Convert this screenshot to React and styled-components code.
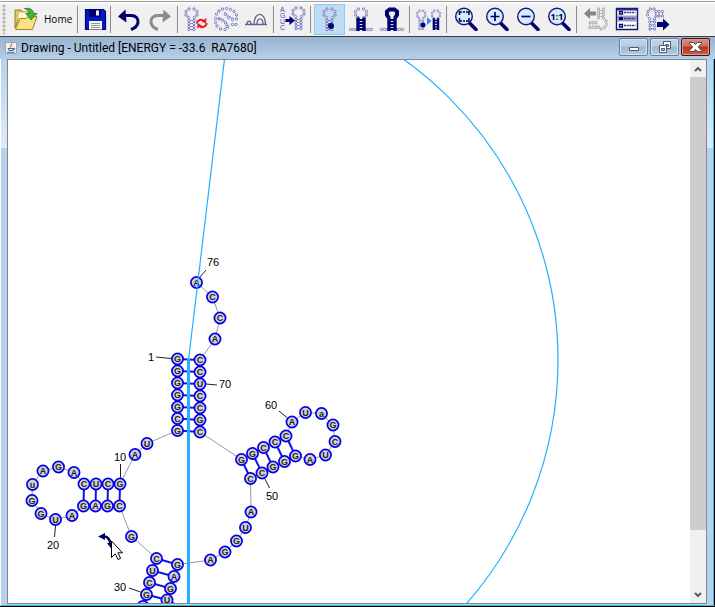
import React from "react";
import styled, { createGlobalStyle } from "styled-components";

const NAVY = "#00006e";
const CYAN = "#22b0ff";

const GlobalStyle = createGlobalStyle`
  html, body, #root {
    height: 100%;
  }
  body {
    margin: 0;
    overflow: hidden;
    font-family: "Open Sans", "Noto Sans", sans-serif;
    font-size: 12px;
    color: #000;
  }
  * {
    box-sizing: border-box;
  }
`;

const Page = styled.div`
  height: 100%;
  display: flex;
  flex-direction: column;
  background: #fff;
`;

const Toolbar = styled.div`
  display: flex;
  flex: none;
  align-items: center;
  height: 37px;
  padding-top: 2px;
  background: #f0f0f0;
  border-bottom: 1px solid #3c3c3c;
  box-shadow: inset 0 1px 0 #fafafa, inset 0 2px 0 #a0a0a0, inset 0 4px 0 #fafafa;
`;

const Grip = styled.div`
  width: 8px;
  height: 30px;
  background: radial-gradient(circle at 4px 2px, #b4b4b4 1px, transparent 2px);
  background-size: 8px 4px;
`;

const ToolButton = styled.button`
  display: flex;
  flex: none;
  align-items: center;
  justify-content: center;
  width: ${(props) => props.$width || 31}px;
  height: 31px;
  padding: 0;
  font: inherit;
  color: inherit;
  background: ${(props) => (props.$active ? "#c0dcf3" : "transparent")};
  border: 1px solid ${(props) => (props.$active ? "#90c8f6" : "transparent")};
  svg {
    display: block;
    flex: none;
  }
`;

const HomeButton = styled(ToolButton)`
  justify-content: flex-start;
  gap: 6px;
  padding-left: 5px;
  font-size: 10px;
`;

const Separator = styled.div`
  flex: none;
  width: 1px;
  height: 27px;
  margin: 0 3px 0 2px;
  background: #8c8c8c;
`;

const Frame = styled.section`
  flex: 1;
  min-height: 0;
  display: flex;
  flex-direction: column;
  background: #b9d1ea;
  border-bottom: 1px solid #000;
`;

const TitleBar = styled.header`
  display: flex;
  flex: none;
  align-items: center;
  height: 22px;
  padding: 0 5px;
  background: linear-gradient(#98b3d0, #b7d0e9);
  svg {
    display: block;
    flex: none;
  }
  h1 {
    flex: 1;
    margin: 0 0 0 4px;
    font-family: Roboto, "Open Sans", sans-serif;
    font-size: 12px;
    line-height: 20px;
    font-weight: 400;
    white-space: pre;
  }
`;

const WindowButtons = styled.div`
  display: flex;
  align-self: flex-start;
  gap: 2px;
  padding-top: 1px;
`;

const WindowButton = styled.button`
  display: flex;
  align-items: center;
  justify-content: center;
  width: 29px;
  height: 18px;
  padding: 0;
  border: 1px solid ${(props) => (props.$close ? "#43141a" : "#6d7f95")};
  border-radius: 2px;
  box-shadow: inset 0 0 0 1px ${(props) => (props.$close ? "#dc9a90" : "#d3e2f1")};
  background: ${(props) =>
    props.$close
      ? "linear-gradient(#d98f82 0%, #cd6d5c 45%, #b8301b 50%, #cf5f45 100%)"
      : "linear-gradient(#c2d6ea 0%, #b5cce4 45%, #98b5d3 50%, #b7cfe8 100%)"};
`;

const Body = styled.div`
  flex: 1;
  min-height: 0;
  display: flex;
  padding: 0 7px 1px 6px;
  border-left: 1px solid #fff;
  border-right: 1px solid #000;
  border-bottom: 1px solid #20c4f0;
  box-shadow: inset -1px 0 0 #20c4f0;
  background: linear-gradient(#b9d1ea, #dfebf7) 0 0 / 100% 89px no-repeat #b9d1ea;
`;

const Viewport = styled.div`
  flex: 1;
  min-width: 0;
  display: flex;
  border: 1px solid #7c8797;
  background: #fff;
`;

const Canvas = styled.svg`
  flex: 1;
  min-width: 0;
  height: 100%;
  display: block;
  font-family: "Liberation Sans", Arial, sans-serif;
`;

const ScrollBar = styled.div`
  display: flex;
  flex: none;
  flex-direction: column;
  width: 16px;
  background: #f0f0f0;
`;

const ScrollButton = styled.button`
  display: flex;
  flex: none;
  align-items: center;
  justify-content: center;
  height: 17px;
  padding: 0;
  border: 0;
  background: transparent;
`;

const Track = styled.div`
  flex: 1;
`;

const Thumb = styled.div`
  height: 89%;
  background: #cdcdcd;
`;

// x, y, base in sequence order
const BASES = [
  [177.5, 359, "G"],
  [177.5, 371, "G"],
  [177.5, 383, "G"],
  [177.5, 395, "G"],
  [177.5, 407, "G"],
  [177.5, 418.5, "C"],
  [177.5, 430.5, "G"],
  [147, 443.5, "U"],
  [135, 454.5, "A"],
  [120, 484, "G"],
  [108, 484, "C"],
  [96, 484, "U"],
  [84, 484, "C"],
  [74, 472.5, "A"],
  [58.5, 467, "G"],
  [43, 471, "A"],
  [32.5, 484.5, "u"],
  [32, 500.5, "G"],
  [41, 513.5, "G"],
  [55.5, 519.5, "U"],
  [72, 515.5, "A"],
  [83.5, 506, "G"],
  [95.5, 506, "A"],
  [107.5, 506, "G"],
  [119.5, 506, "C"],
  [131.5, 536.5, "G"],
  [156.5, 558.5, "C"],
  [152.5, 570.5, "U"],
  [149.5, 582.5, "C"],
  [146.5, 594.5, "G"],
  [143, 606.5, "G"],
  [163, 612.5, "C"],
  [167, 600, "U"],
  [170.5, 588.5, "G"],
  [174, 576.5, "A"],
  [177.5, 564.5, "G"],
  [210.5, 560, "A"],
  [225, 552, "G"],
  [236.5, 541, "G"],
  [245.5, 527.5, "U"],
  [251, 512, "A"],
  [250.5, 478.5, "C"],
  [262, 473, "C"],
  [273, 467, "G"],
  [284.5, 461.5, "G"],
  [295.5, 456, "G"],
  [310, 459.5, "A"],
  [325.5, 455, "U"],
  [335, 441.5, "C"],
  [333, 425, "G"],
  [321.5, 413.5, "a"],
  [305.5, 412.5, "U"],
  [292, 422, "A"],
  [286, 436, "C"],
  [275, 442, "C"],
  [263.5, 447.5, "C"],
  [252.5, 453.5, "G"],
  [241.5, 459.5, "G"],
  [200, 432, "C"],
  [200, 420, "G"],
  [200, 408, "C"],
  [200, 396, "C"],
  [200, 384, "U"],
  [200, 372, "C"],
  [200, 360, "C"],
  [215, 339, "A"],
  [220, 318, "C"],
  [212.5, 297, "C"],
  [196.5, 282.5, "A"],
];

// first index, last index, number of stacked pairs
const HELICES = [
  [0, 64, 7],
  [9, 24, 4],
  [26, 35, 5],
  [41, 57, 5],
];

const PAIRS = HELICES.flatMap(([a, b, n]) =>
  Array.from({ length: n }, (_, i) => [BASES[a + i], BASES[b - i]])
);

const LABELS = [
  { text: "76", x: 207, y: 266, tick: [200, 277, 206, 270] },
  { text: "1", x: 148, y: 361, tick: [156, 357, 171, 358.5] },
  { text: "70", x: 219, y: 388, tick: [206, 384, 217, 385] },
  { text: "60", x: 265, y: 409, tick: [279, 411, 287.5, 418] },
  { text: "50", x: 266, y: 500, tick: [264.5, 478, 269.5, 488] },
  { text: "10", x: 114, y: 461, tick: [120.5, 464, 120.5, 478] },
  { text: "20", x: 47, y: 549, tick: [55.5, 526, 54.5, 537] },
  { text: "30", x: 114, y: 591, tick: [129, 588, 140.5, 592] },
  { text: "40", x: 183, y: 613, tick: [172, 602, 180, 606] },
];

function Structure() {
  return (
    <Canvas role="img" aria-label="RNA secondary structure">
      <g transform="translate(-8 -60)">
        <polyline
          points={BASES.map(([x, y]) => `${x},${y}`).join(" ")}
          fill="none"
          stroke="#9a9a9a"
        />
        {PAIRS.map(([a, b], i) => (
          <line key={i} x1={a[0]} y1={a[1]} x2={b[0]} y2={b[1]} stroke="#1414e6" strokeWidth="2" />
        ))}
        {LABELS.filter(({ y }) => y < 604).map(({ text, x, y }) => (
          <text key={text} x={x} y={y} fontSize="11">
            {text}
          </text>
        ))}
        {LABELS.map(({ text, tick }) => (
          <line key={text} x1={tick[0]} y1={tick[1]} x2={tick[2]} y2={tick[3]} stroke="#222" />
        ))}
        {BASES.map(([x, y, base], i) => (
          <g key={i}>
            <circle cx={x} cy={y} r="5.6" fill="#d2d2d2" stroke="#0000f0" strokeWidth="1.7" />
            {y < 604 && (
              <text x={x} y={y + 3} fontSize="9" fontWeight="700" textAnchor="middle" fill="#222">
                {base}
              </text>
            )}
          </g>
        ))}
        <circle cx="188" cy="360" r="370" fill="none" stroke={CYAN} strokeWidth="1.2" />
        <path d="M224.5 59 188.5 360" stroke={CYAN} strokeWidth="1.2" />
        <path d="M188.5 359V2000" stroke={CYAN} strokeWidth="3" />
        <path d="M104 536.5q5 0 6.5 7" fill="none" stroke="#00005a" strokeWidth="2.6" />
        <path d="M98 536.5 105 533v7zM107 543h6.5l-2 6z" fill="#00005a" />
        <path
          d="M111.5 541v16.500l3.800-3.600 2.800 5.600 2.500-1.200-2.700-5.500h4.600z"
          fill="#fff"
          stroke="#000"
        />
      </g>
    </Canvas>
  );
}

function Icon({ children, size = 24 }) {
  return (
    <svg width={size} height={size} viewBox={`0 0 ${size} ${size}`} fill="none" aria-hidden="true">
      {children}
    </svg>
  );
}

function Dots({ points, color = "#5f64ad", r = 1.2 }) {
  return points.map(([x, y], i) => (
    <circle key={i} cx={x} cy={y} r={r} fill="#f4f4fb" stroke={color} strokeWidth="0.8" />
  ));
}

const LOOP = [[4.5, 10.5], [2, 8], [2, 4.5], [5, 2], [10, 2], [13, 4.5], [13, 8], [10.5, 10.5]];
const STEM = [13.5, 16.5, 19.5, 22.5].flatMap((y) => [[5, y], [10, y]]);
const FEET = [1.5, 4.5, 7.5, 16.5, 19.5, 22.5].map((x) => [x, 22.5]);

function Hairpin({ x = 0, stem = "open" }) {
  return (
    <g transform={`translate(${x} 0)`}>
      <Dots points={LOOP} />
      {stem === "open" ? (
        <>
          <path d="M6 13.500h3M6 16.500h3M6 19.500h3M6 22.500h3" stroke="#5c5cff" strokeWidth="0.8" />
          <Dots points={STEM} />
        </>
      ) : (
        <>
          <path d="M4.500 10.500V24M10.500 10.500V24" stroke={NAVY} strokeWidth="3.400" />
          <path d="M4 13h7M4 16h7M4 19h7M4 22h7" stroke={NAVY} strokeWidth="1.800" />
        </>
      )}
    </g>
  );
}

function FolderIcon() {
  return (
    <Icon>
      <path d="M1 3h6l2 2h8v5H5L1 21z" fill="#e8c860" stroke="#9b7a1e" />
      <path d="M4 5h10v10H4z" fill="#fff8d8" stroke="#c9ad58" strokeWidth="0.800" />
      <path d="M1.500 22.500 6 11.500h6l2-2h9l-4.500 13z" fill="#f8e080" stroke="#a78427" />
      <path d="M7 21 11 13M12 20l4-8" stroke="#fff3b0" />
      <path
        d="M10.500 1.500C16 .5 19.500 3 19.500 6.500H23L17 13l-5-6.500h3.500c0-2-1.500-3.500-5-5z"
        fill="#42b934"
        stroke="#167a1c"
        strokeWidth="0.800"
      />
    </Icon>
  );
}

function SaveIcon() {
  return (
    <Icon>
      <path d="M2.500 2.500h18l2 2v18h-20z" fill="#001bc4" stroke={NAVY} strokeWidth="1.200" />
      <path d="M6 3h12v7H6z" fill={NAVY} />
      <path d="M13 3.500h3v5h-3z" fill="#e8eefa" />
      <path d="M6 14h13v8.500H6z" fill="#f4f6fa" />
      <path d="M8 16.500h9M8 18.500h9M8 20.500h9" stroke="#999" />
    </Icon>
  );
}

function TurnIcon({ redo }) {
  const color = redo ? "#8b8b8b" : NAVY;
  return (
    <Icon>
      <g transform={redo ? "matrix(-1 0 0 1 24 0)" : undefined}>
        <path d="M6 8.500h8c5 0 7.500 3 7 7S18 21 14 22.500" stroke={color} strokeWidth="3" />
        <path d="M1 9.500 8.500 2.500 9.500 15.500z" fill={color} />
      </g>
    </Icon>
  );
}

function RedrawIcon() {
  return (
    <Icon>
      <Hairpin />
      <path d="M13 16.500c0-3.500 5-5 7-2M22.500 16c0 4-5 5.500-7.500 2.500" stroke="#ed1c24" strokeWidth="2" />
      <path d="m22.500 11-.5 5.500-4.500-2zM13 21.500l.5-5.500 4.500 2.500z" fill="#ed1c24" />
    </Icon>
  );
}

function RadialIcon() {
  return (
    <Icon>
      <path d="M4 10.500q4 .5 8 4.500 3 3 2.500 7M10 5q4 4.500 10 7" stroke="#5c5cff" strokeWidth="0.700" />
      <Dots
        points={[
          [1.5, 11.5], [2.5, 7], [5, 4], [8.5, 2], [12.5, 1.5], [16.5, 2.5], [20, 4.5], [22.5, 8],
          [22.5, 12], [18.5, 12.5], [14.5, 10.5], [11.5, 7.5], [5, 12], [8.5, 13.5],
          [11.5, 16], [13, 19.5], [11, 22.5], [6.5, 22], [3, 19], [1.5, 15.5], [18.5, 17.5], [22, 17.5],
        ]}
      />
    </Icon>
  );
}

function ArcIcon() {
  return (
    <Icon>
      <path
        d="M1 17.500h22M3 17.500c0-4.500 4-4.500 4 0M10 17.500C10 4 21.500 4 21.500 17.500M13 17.500c0-7.500 6-7.500 6 0"
        stroke="#62628c"
        strokeWidth="1.300"
      />
    </Icon>
  );
}

function SequenceIcon() {
  return (
    <Icon size={26}>
      <g fill="#484d9c" fontSize="7" fontFamily="Liberation Sans, sans-serif">
        {["A", "G", "U", "C"].map((c, i) => (
          <text key={c} x="0" y={6 + i * 6}>
            {c}
          </text>
        ))}
      </g>
      <path d="M5.500 13h4v-3l5.500 4.500-5.500 4.500v-3h-4z" fill={NAVY} />
      <Hairpin x={11} />
    </Icon>
  );
}

function BaseIcon() {
  return (
    <Icon>
      <Hairpin x={4} />
      <circle cx="13" cy="19" r="3" fill={NAVY} />
    </Icon>
  );
}

function HelixIcon({ whole }) {
  return (
    <Icon>
      <Dots points={FEET} />
      <Hairpin x={4.5} stem="solid" />
      {whole && (
        <path
          d="M9 11 7 8V4.500L9.500 2.500h5L17 4.500V8l-2 3"
          stroke={NAVY}
          strokeWidth="4"
          strokeLinejoin="round"
        />
      )}
    </Icon>
  );
}

function ConvertIcon() {
  return (
    <Icon size={26}>
      <g transform="translate(0 3) scale(.7 .88)">
        <Hairpin />
        <Hairpin x={21} stem="solid" />
      </g>
      <circle cx="7" cy="19" r="2.500" fill={NAVY} />
      <path d="m11 11 4.500 4-4.500 4z" fill="#1e90ff" />
    </Icon>
  );
}

function LensIcon({ kind }) {
  return (
    <Icon>
      <path d="m15.500 16 6.500 6.500" stroke={NAVY} strokeWidth="3.600" strokeLinecap="round" />
      <circle cx="10" cy="9.500" r="8.300" fill="#d6ebff" stroke="#17177a" strokeWidth="1.400" />
      {kind === "fit" && (
        <path
          d="M5.500 8V5H8M12 5h3v3M15 11v3h-3M8 14H5.500v-3M9 5h2M9 14h2"
          stroke="#000040"
          strokeWidth="1.500"
        />
      )}
      {kind === "in" && <path d="M10 5v9M5.500 9.500h9" stroke={NAVY} strokeWidth="1.700" />}
      {kind === "out" && <path d="M5.500 9.500h9" stroke={NAVY} strokeWidth="1.700" />}
      {kind === "one" && (
        <text
          x="10"
          y="13"
          fill="#000030"
          fontSize="9"
          fontWeight="700"
          textAnchor="middle"
          fontFamily="Open Sans, sans-serif"
        >
          1:1
        </text>
      )}
    </Icon>
  );
}

function ImportIcon() {
  return (
    <Icon>
      <path d="M0 6.500 6 1v3.500h6v4H6V12z" fill="#858585" />
      <path d="M14.500 3.500h5M14.500 6.500h5M14.500 9.500h5M6 15v6M9 15v6M12 15v6" stroke="#bbb" />
      <Dots
        color="#969696"
        points={[
          [14.5, 2], [14.5, 5], [14.5, 8], [14.5, 11], [19.5, 2], [19.5, 5],
          [19.5, 8], [19.5, 11], [22, 14], [22.5, 17.5], [20.5, 20.5], [17, 22], [14.5, 20],
          [6, 15.5], [9, 15.5], [12, 15.5], [6, 20.5], [9, 20.5], [12, 20.5],
        ]}
      />
    </Icon>
  );
}

function ListIcon() {
  return (
    <Icon>
      <path d="M1.500 1.500h21v21h-21z" fill="#fff" stroke="#18186e" strokeWidth="1.400" />
      <path d="M2 8.500h20v6H2z" fill="#9a9ccc" />
      <path d="M2 2h20v1.500H2z" fill="#30308a" />
      <path d="M4.500 4.500h3v2.500h-3zM4.500 17.500h3v2.500h-3z" stroke={NAVY} strokeWidth="1.300" />
      <path d="M4 10h4v3H4z" fill={NAVY} />
      <path
        d="M9 5.500h11.500M9 11.500h11.500M9 18.500h11.500"
        stroke="#30308a"
        strokeWidth="1.300"
        strokeDasharray="2 .7"
      />
    </Icon>
  );
}

function ExportIcon() {
  return (
    <Icon>
      <path d="M4 14.500h5M4 18h5M4 21.500h5M13 4v5M16.500 4v5M9.500 4v5" stroke="#5c5cff" strokeWidth="0.700" />
      <Dots
        points={[
          [1.5, 8], [2, 4.5], [4.5, 2], [8, 2], [10, 4.5], [13, 4.5], [16.5, 4.5], [10, 9],
          [13, 9], [16.5, 9], [3.5, 11.5], [4, 15], [4, 18.5], [4, 22], [8.5, 12],
          [8.5, 15], [8.5, 18.5], [8.5, 22],
        ]}
      />
      <path d="M11 15h6v-3.500l6.500 6-6.500 6V20h-6z" fill={NAVY} />
    </Icon>
  );
}

function JavaIcon() {
  return (
    <svg width="12" height="12" viewBox="0 0 12 12" fill="none" aria-hidden="true">
      <path d="M.5.5h11v11H.5z" fill="#edf1f5" stroke="#9aa7b5" />
      <path d="M6.500 1C8 2.500 4 3.500 6 5.500" stroke="#e57a22" strokeWidth="1.300" />
      <path d="M3 6.500h5v2H4zM8 6.500h1.500v1H8M2 10.300h7.500" stroke="#3f6d99" />
    </svg>
  );
}

function App() {
  return (
    <Page>
      <GlobalStyle />
      <Toolbar role="toolbar">
        <Grip />
        <HomeButton $width={67}>
          <FolderIcon />
          Home
        </HomeButton>
        <Separator />
        <ToolButton $width={27} aria-label="Save"><SaveIcon /></ToolButton>
        <Separator />
        <ToolButton $width={30} aria-label="Undo"><TurnIcon /></ToolButton>
        <ToolButton aria-label="Redo" disabled><TurnIcon redo /></ToolButton>
        <Separator />
        <ToolButton $width={30} aria-label="Redraw"><RedrawIcon /></ToolButton>
        <ToolButton $width={30} aria-label="Flatten"><RadialIcon /></ToolButton>
        <ToolButton $width={30} aria-label="Arc view"><ArcIcon /></ToolButton>
        <Separator />
        <ToolButton aria-label="Fold sequence"><SequenceIcon /></ToolButton>
        <Separator />
        <ToolButton $active aria-label="Select base" aria-pressed="true"><BaseIcon /></ToolButton>
        <ToolButton aria-label="Select helix"><HelixIcon /></ToolButton>
        <ToolButton aria-label="Select branch"><HelixIcon whole /></ToolButton>
        <Separator />
        <ToolButton aria-label="Expand selection"><ConvertIcon /></ToolButton>
        <Separator />
        <ToolButton aria-label="Zoom to fit"><LensIcon kind="fit" /></ToolButton>
        <ToolButton aria-label="Zoom in"><LensIcon kind="in" /></ToolButton>
        <ToolButton aria-label="Zoom out"><LensIcon kind="out" /></ToolButton>
        <ToolButton aria-label="Actual size"><LensIcon kind="one" /></ToolButton>
        <Separator />
        <ToolButton aria-label="Previous structure" disabled><ImportIcon /></ToolButton>
        <ToolButton aria-label="Structure list"><ListIcon /></ToolButton>
        <ToolButton aria-label="Next structure"><ExportIcon /></ToolButton>
      </Toolbar>

      <Frame>
        <TitleBar>
          <JavaIcon />
          <h1>{"Drawing - Untitled [ENERGY = -33.6  RA7680]"}</h1>
          <WindowButtons>
            <WindowButton aria-label="Minimize">
              <svg width="12" height="12" viewBox="0 0 12 12">
                <path d="M1.500 6.500h9v3h-9z" fill="#fff" stroke="#545b66" />
              </svg>
            </WindowButton>
            <WindowButton aria-label="Restore">
              <svg width="12" height="12" viewBox="0 0 12 12" fill="#fff" stroke="#545b66">
                <path d="M4.500.5h7v7h-7z" />
                <path d="M6.500 3.500h3v2h-3z" fill="#a9c2dc" />
                <path d="M.5 4.500h7v7h-7z" />
                <path d="M2.500 7.500h3v2h-3z" fill="#a9c2dc" />
              </svg>
            </WindowButton>
            <WindowButton $close aria-label="Close">
              <svg width="13" height="10" viewBox="0 0 13 10">
                <path
                  d="M.5.5h4l2 2 2-2h4v1L9.300 5l3.200 3.500v1h-4l-2-2-2 2h-4v-1L3.700 5 .5 1.500z"
                  fill="#fff"
                  stroke="#51484e"
                />
              </svg>
            </WindowButton>
          </WindowButtons>
        </TitleBar>
        <Body>
          <Viewport>
            <Structure />
            <ScrollBar>
              <ScrollButton aria-label="Scroll up">
                <svg width="8" height="6" viewBox="0 0 8 6">
                  <path d="M1 5 4 2l3 3" fill="none" stroke="#505050" strokeWidth="1.800" />
                </svg>
              </ScrollButton>
              <Track>
                <Thumb />
              </Track>
              <ScrollButton aria-label="Scroll down">
                <svg width="8" height="6" viewBox="0 0 8 6">
                  <path d="m1 1 3 3 3-3" fill="none" stroke="#505050" strokeWidth="1.800" />
                </svg>
              </ScrollButton>
            </ScrollBar>
          </Viewport>
        </Body>
      </Frame>
    </Page>
  );
}

export default App;
